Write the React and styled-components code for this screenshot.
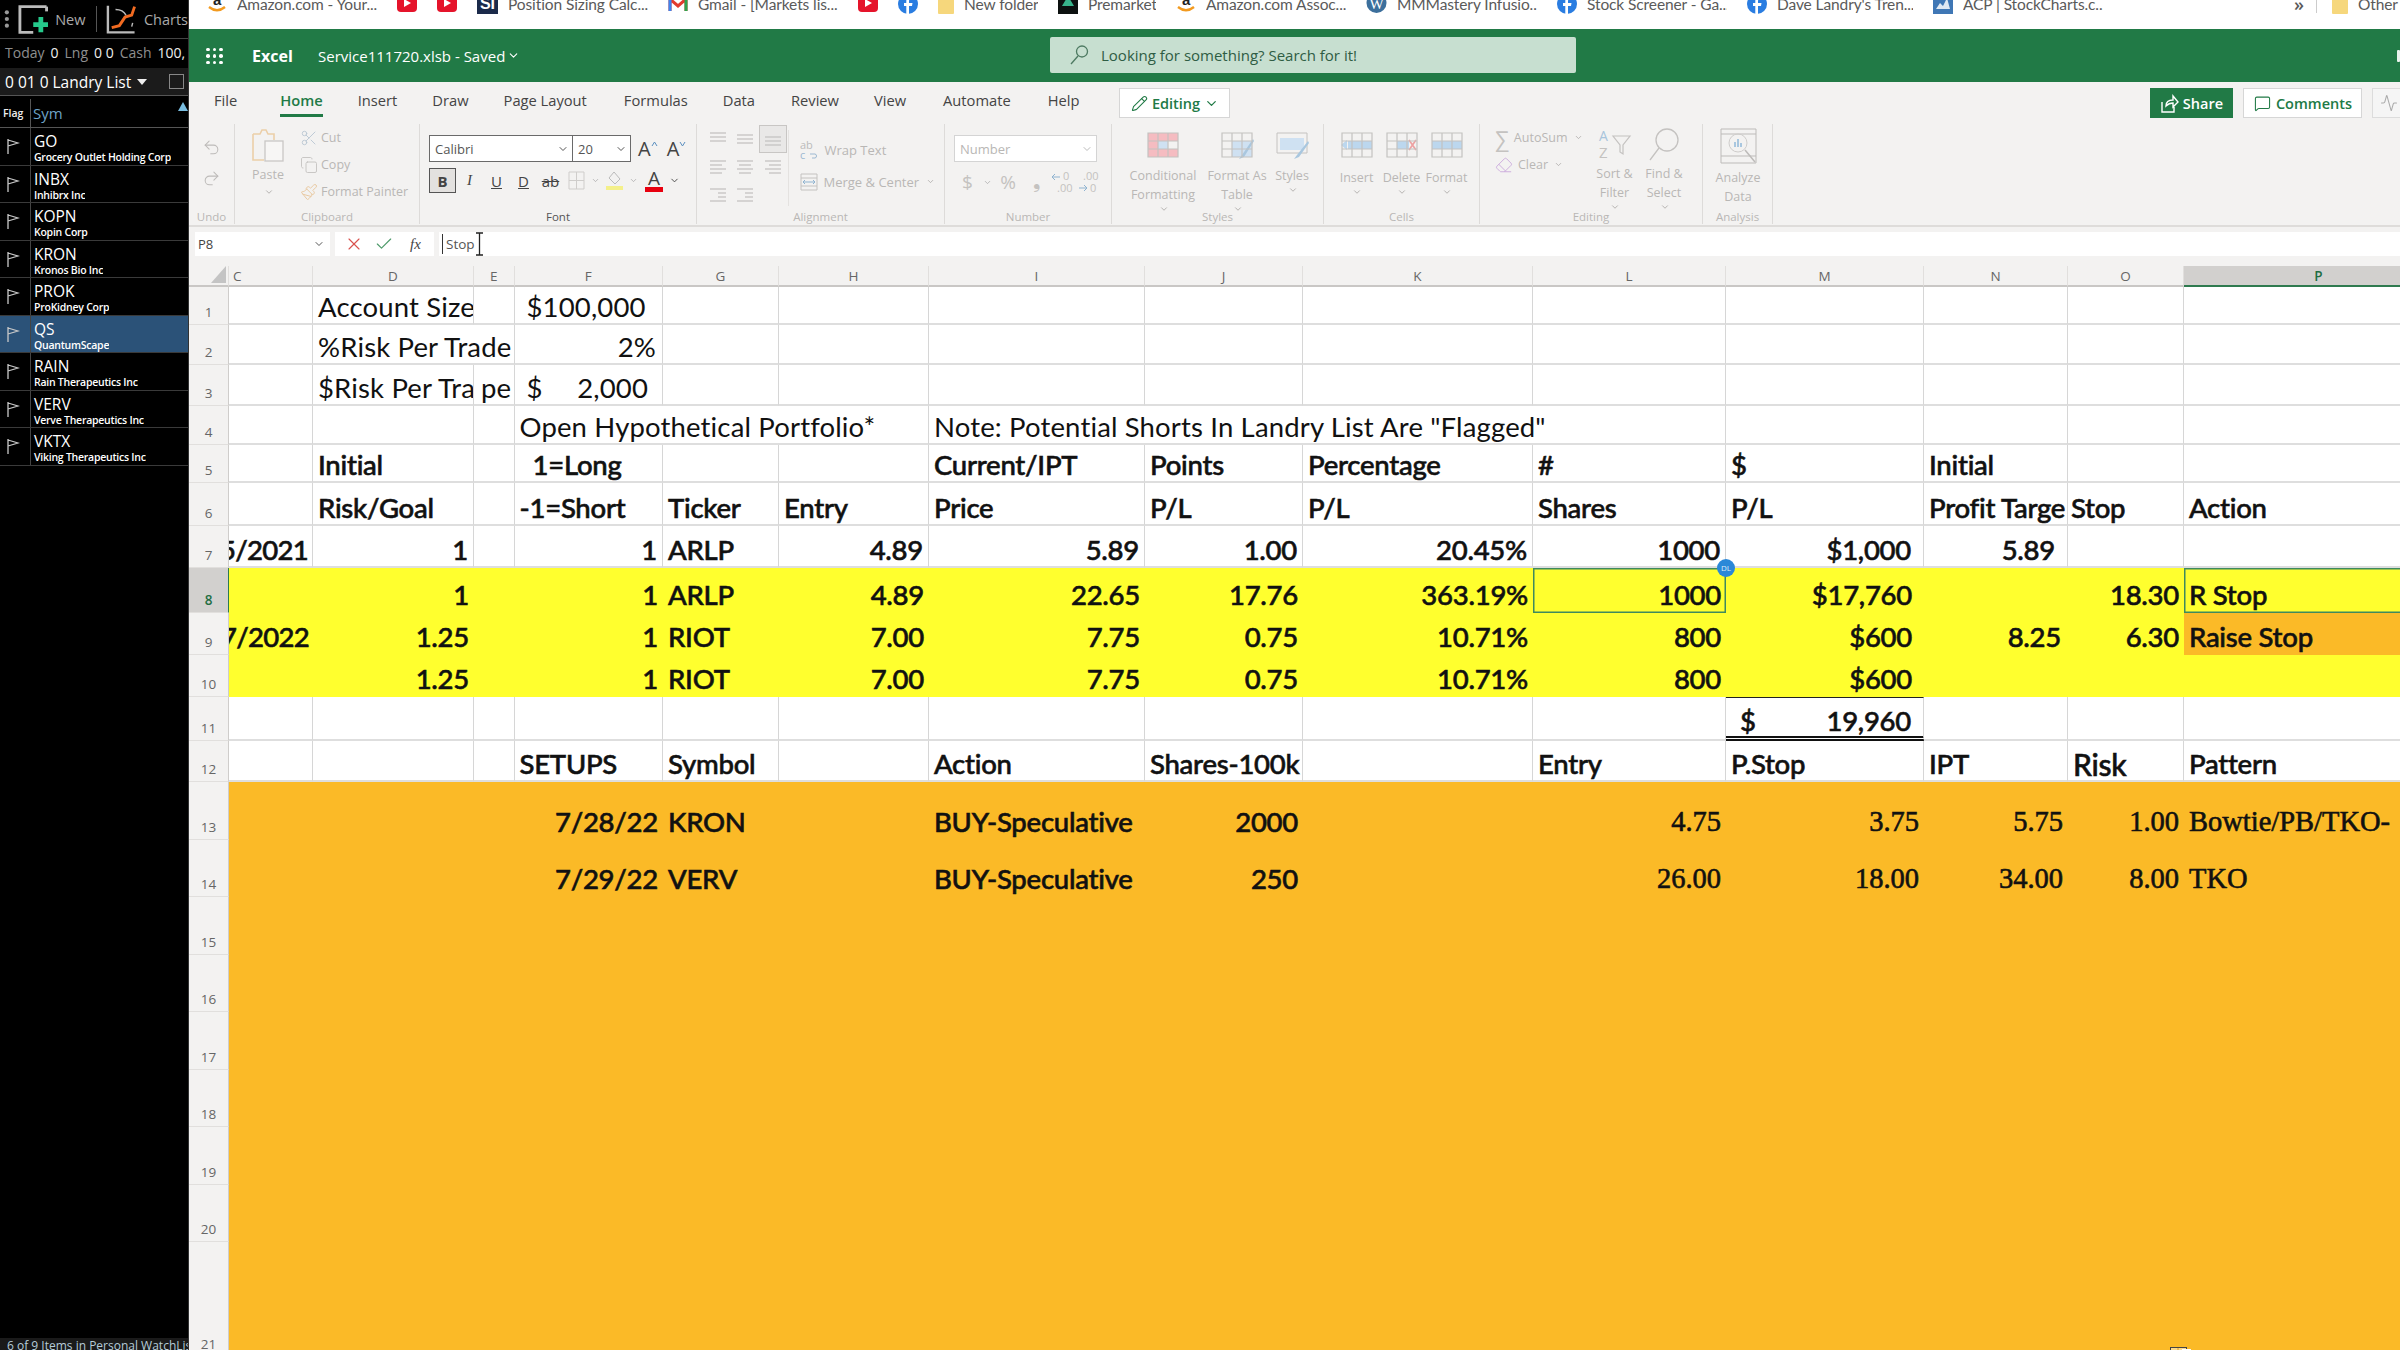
import React from 'react';
import styled, { createGlobalStyle } from 'styled-components';
import { Undo2, Redo2, Scissors, Copy, Paintbrush, ChevronDown, Pencil, MessageSquare, X, Check, Eraser, Activity } from 'lucide-react';

const Global = createGlobalStyle`
  html, body { margin: 0; padding: 0; width: 2400px; height: 1350px; overflow: hidden; background: #000; }
  * { box-sizing: border-box; }
`;

const UI = `"Open Sans", "Noto Sans", sans-serif`;
const CAL = `Lato, "Liberation Sans", sans-serif`;
const SER = `"Liberation Serif", serif`;
const GREEN = '#217a46';
const DIM = '#b9b7b5';

const Page = styled.div`display: flex; width: 2400px; height: 1350px; overflow: hidden; font-family: ${UI};`;

/* ---------- Sidebar ---------- */
const Sidebar = styled.aside`width: 189px; flex: none; background: #000; color: #fff; display: flex; flex-direction: column; height: 1350px; border-right: 1px solid #333;`;
const SideTools = styled.div`height: 39px; display: flex; align-items: center; padding-left: 4px; border-bottom: 1px solid #444; flex: none; color: #aaa; font-size: 14.5px;`;
const ToolLabel = styled.span`margin-left: ${p => p.$gap}px;`;
const ToolSep = styled.span`width: 1px; height: 26px; background: #555; margin: 0 9px 0 11px;`;
const Stats = styled.div`height: 27px; display: flex; align-items: center; gap: 6px; padding-left: 5px; font-size: 14px; color: #8f8f8f; flex: none; white-space: nowrap; overflow: hidden;`;
const StatVal = styled.span`color: #eee;`;
const ListBar = styled.div`height: 28px; margin: 2px 0 3px; display: flex; align-items: center; background: #1b1b1b; padding: 0 4px 0 5px; font-size: 15.5px; color: #fff; border-bottom: 1px solid #555; flex: none; white-space: nowrap;`;
const Caret = styled.span`width: 0; height: 0; border-left: 5px solid transparent; border-right: 5px solid transparent; border-top: 6px solid #eee; margin-left: 6px;`;
const CheckBox = styled.span`width: 15px; height: 15px; border: 1px solid #888; margin-left: auto;`;
const SideHead = styled.div`height: 29px; display: flex; align-items: stretch; border-bottom: 1px solid #555; position: relative; flex: none;`;
const FlagHead = styled.div`width: 31px; flex: none; border-right: 1px solid #555; font-size: 10.5px; font-weight: 600; display: flex; align-items: center; padding-left: 3px; color: #eee;`;
const SymHead = styled.div`padding-left: 2px; font-size: 15px; color: #6ea3c8; display: flex; align-items: center;`;
const SortUp = styled.span`position: absolute; right: 0; top: 3px; width: 0; height: 0; border-left: 5px solid transparent; border-right: 5px solid transparent; border-bottom: 9px solid #79bde0;`;
const StockRow = styled.div`height: 37.5px; display: flex; align-items: stretch; border-bottom: 1px solid #3a3a3a; background: ${p => p.$on ? '#2b5278' : 'transparent'}; flex: none;`;
const FlagCell = styled.div`width: 31px; flex: none; border-right: 1px solid #444; display: flex; align-items: center; justify-content: center; padding-right: 4px;`;
const StockText = styled.div`padding-left: 3px; display: flex; flex-direction: column; white-space: nowrap; overflow: hidden;`;
const Ticker = styled.div`font-size: 15.5px; line-height: 18px; margin-top: 4px;`;
const StockName = styled.div`font-size: 10.5px; letter-spacing: -0.25px; line-height: 14px; font-weight: 600;`;
const SideFoot = styled.div`margin-top: auto; height: 12px; background: #1a1a1a; color: #b5cbd8; font-size: 12px; line-height: 15px; padding-left: 7px; white-space: nowrap; overflow: hidden; flex: none;`;

const stocks = [
  ['GO', 'Grocery Outlet Holding Corp'], ['INBX', 'Inhibrx Inc'], ['KOPN', 'Kopin Corp'], ['KRON', 'Kronos Bio Inc'],
  ['PROK', 'ProKidney Corp'], ['QS', 'QuantumScape'], ['RAIN', 'Rain Therapeutics Inc'], ['VERV', 'Verve Therapeutics Inc'], ['VKTX', 'Viking Therapeutics Inc'],
];

const FlagIcon = () => (
  <svg width="14" height="16" viewBox="0 0 14 16" fill="none" stroke="#c9c9c9" strokeWidth="1.3"><path d="M2 1v15M2 2l10 3-10 3" /></svg>
);

const Side = () => (
  <Sidebar>
    <SideTools>
      <svg width="6" height="20" viewBox="0 0 6 20" fill="#999"><circle cx="3" cy="3" r="2.2" /><circle cx="3" cy="10" r="2.2" /><circle cx="3" cy="17" r="2.2" /></svg>
      <svg style={{ marginLeft: 8 }} width="32" height="32" viewBox="0 0 32 32" fill="none"><path d="M30 3H2v27h14" stroke="#bbb" strokeWidth="3" /><path d="M30 3v5" stroke="#bbb" strokeWidth="3" /><path d="M24 14v16M16 22h16" stroke="#25c98b" strokeWidth="5" /></svg>
      <ToolLabel $gap={7}>New</ToolLabel>
      <ToolSep />
      <svg width="32" height="32" viewBox="0 0 32 32" fill="none"><path d="M2 2v28h28" stroke="#bbb" strokeWidth="2.5" /><path d="M6 25l8-2 6-9 7-2 3-9" stroke="#f26b21" strokeWidth="3" /><path d="M10 6c6 0 9 2 11 6M28 20l-1 4" stroke="#bbb" strokeWidth="1.5" /></svg>
      <ToolLabel $gap={7}>Charts</ToolLabel>
    </SideTools>
    <Stats>Today <StatVal>0</StatVal> Lng<StatVal>0 0</StatVal> Cash <StatVal>100,</StatVal></Stats>
    <ListBar>0 01 0 Landry List<Caret /><CheckBox /></ListBar>
    <SideHead><FlagHead>Flag</FlagHead><SymHead>Sym</SymHead><SortUp /></SideHead>
    {stocks.map(([t, n]) => (
      <StockRow key={t} $on={t === 'QS'}>
        <FlagCell><FlagIcon /></FlagCell>
        <StockText><Ticker>{t}</Ticker><StockName>{n}</StockName></StockText>
      </StockRow>
    ))}
    <SideFoot>6 of 9 Items in Personal WatchList</SideFoot>
  </Sidebar>
);

/* ---------- Bookmarks ---------- */
const Excel = styled.main`flex: 1; min-width: 0; display: flex; flex-direction: column; background: #fff; overflow: hidden;`;
const BookBar = styled.div`height: 29px; flex: none; background: #fff; overflow: hidden;`;
const BookRow = styled.div`height: 20px; margin-top: -6px; display: flex; align-items: center; gap: 20px; padding-left: 18px; white-space: nowrap;`;
const Book = styled.div`display: flex; align-items: center; gap: 10px; flex: none; color: #5a5a5a; font-family: Lato, sans-serif; font-size: 15.5px; letter-spacing: -0.1px;`;
const BookText = styled.span`width: ${p => p.$w || 140}px; overflow: hidden; white-space: nowrap;`;
const More = styled.div`margin-left: auto; display: flex; align-items: center; color: #5a5a5a; font-size: 18px; font-weight: 600; flex: none;`;
const MoreSep = styled.span`width: 1px; height: 18px; background: #ccc; margin: 0 -5px 0 12px;`;

const Amz = () => <svg width="20" height="20" viewBox="0 0 20 20"><text x="10" y="11" textAnchor="middle" fontSize="15" fontWeight="700" fontFamily="Liberation Sans" fill="#222">a</text><path d="M2 13c5 4 11 4 16 0" stroke="#f29a1f" strokeWidth="2.4" fill="none" /></svg>;
const YT = () => <svg width="20" height="20" viewBox="0 0 20 20"><rect width="20" height="18" rx="4" fill="#e5142b" /><path d="M7 5l7 4-7 4z" fill="#fff" /></svg>;
const FB = () => <svg width="20" height="20" viewBox="0 0 20 20"><circle cx="10" cy="10" r="10" fill="#2a7de1" /><path d="M11 20v-8h3l.5-3H11V7c0-1 .5-1.6 1.7-1.6H14.500V3h-2.500C9.700 3 8.300 4.400 8.300 6.800V9H6v3h2.300v8z" fill="#fff" /></svg>;
const Folder = () => <svg width="16" height="20" viewBox="0 0 16 20"><rect width="16" height="20" rx="1" fill="#f6d77c" /></svg>;
const SI = () => <svg width="21" height="20" viewBox="0 0 21 20"><rect width="21" height="20" fill="#1b2a4a" /><text x="10.500" y="15" textAnchor="middle" fontSize="16" fontWeight="700" fontFamily="Liberation Sans" fill="#fff">SI</text></svg>;
const Gm = () => <svg width="20" height="16" viewBox="0 0 20 16" fill="none"><path d="M2 15V3l8 7 8-7v12" stroke="#e33b2e" strokeWidth="3" /><path d="M2 15V4" stroke="#3f84ee" strokeWidth="3" /><path d="M18 15V4" stroke="#2ea44f" strokeWidth="3" /></svg>;
const Pre = () => <svg width="20" height="20" viewBox="0 0 20 20"><rect width="20" height="20" fill="#0d1110" /><path d="M10 2l6 10H4z" fill="#38b48b" /></svg>;
const WP = () => <svg width="21" height="20" viewBox="0 0 21 20"><circle cx="10.500" cy="9" r="10" fill="#3c6f9c" /><text x="10.500" y="15" textAnchor="middle" fontSize="15" fontFamily="Liberation Serif" fill="#fff">W</text></svg>;
const ACP = () => <svg width="20" height="20" viewBox="0 0 20 20"><rect width="20" height="20" fill="#3f77b5" /><path d="M3 15l4-6 3 3 4-8 3 11z" fill="#dfe8f2" /></svg>;

const books = [
  [Amz, 'Amazon.com - Your...'], [YT], [YT], [SI, 'Position Sizing Calc...'], [Gm, 'Gmail - [Markets lis...'], [YT], [FB],
  [Folder, 'New folder', 74], [Pre, 'Premarket', 68], [Amz, 'Amazon.com Assoc...'], [WP, 'MMMastery Infusio...'], [FB, 'Stock Screener - Ga...'],
  [FB, "Dave Landry's Tren...", 136], [ACP, 'ACP | StockCharts.c...'],
];

const Bookmarks = () => (
  <BookBar>
    <BookRow>
      {books.map(([I, t, w], i) => (
        <Book key={i}><I />{t && <BookText $w={w}>{t}</BookText>}</Book>
      ))}
      <More>»<MoreSep /></More>
      <Book><Folder /><BookText $w={42}>Other bookmarks</BookText></Book>
    </BookRow>
  </BookBar>
);

/* ---------- Green title bar ---------- */
const TitleBar = styled.header`height: 53px; flex: none; background: ${GREEN}; color: #fff; display: flex; align-items: center; padding-left: 17px; position: relative;`;
const Waffle = styled.div`width: 18px; height: 16px; display: grid; grid-template-columns: repeat(3, 3.5px); grid-auto-rows: 3.5px; gap: 3px; margin-right: 28px;`;
const Dot = styled.i`background: #fff; border-radius: 50%;`;
const AppName = styled.div`font-size: 16px; font-weight: 700; width: 66px;`;
const FileName = styled.div`font-size: 15px; width: 208px; display: flex; align-items: center; gap: 2px; white-space: nowrap;`;
const SearchBox = styled.div`margin-left: 524px; width: 526px; height: 36px; margin-top: -2px; background: #c7dfd0; border-radius: 2px; color: #2f5d44; display: flex; align-items: center; padding-left: 20px; gap: 12px; font-size: 15px; white-space: nowrap; flex: none;`;
const EdgeMark = styled.span`margin-left: auto; width: 3px; height: 12px; background: #e8f2ec; border-radius: 1px;`;

const TitleRow = () => (
  <TitleBar>
    <Waffle>{Array.from({ length: 9 }, (_, i) => <Dot key={i} />)}</Waffle>
    <AppName>Excel</AppName>
    <FileName>Service111720.xlsb - Saved<ChevronDown size={13} /></FileName>
    <SearchBox>
      <svg width="19" height="20" viewBox="0 0 19 20" fill="none" stroke="#4e7a62" strokeWidth="1.3"><circle cx="12" cy="6.500" r="5.500" /><path d="M8 11l-7 8" /></svg>
      Looking for something? Search for it!
    </SearchBox>
    <EdgeMark />
  </TitleBar>
);

/* ---------- Tabs ---------- */
const TabBar = styled.nav`height: 40px; flex: none; background: #f3f2f1; display: flex; align-items: flex-start; padding-left: 25px; font-size: 14.7px; color: #444; white-space: nowrap;`;
const Tab = styled.div`height: 35px; line-height: 36px; margin-right: ${p => p.$gap}px; border-bottom: 3px solid ${p => p.$on ? GREEN : 'transparent'}; color: ${p => p.$on ? GREEN : '#444'}; font-weight: ${p => p.$on ? 600 : 400};`;
const Mode = styled.button`margin-top: 6px; width: 111px; height: 30px; margin-left: 5px; background: #fff; border: 1px solid #d6d6d6; color: ${GREEN}; font: 600 14.500px ${UI}; display: flex; align-items: center; justify-content: center; gap: 4px; padding: 0; flex: none;`;
const ShareBtn = styled.button`margin-top: 6px; margin-left: 920px; width: 83px; height: 30px; background: ${GREEN}; color: #fff; border: none; font: 600 14.500px ${UI}; display: flex; align-items: center; justify-content: center; gap: 4px; padding: 0; flex: none;`;
const CommentBtn = styled.button`margin-top: 6px; margin-left: 10px; width: 119px; height: 30px; background: #fff; color: ${GREEN}; border: 1px solid #d6d6d6; font: 600 14.500px ${UI}; display: flex; align-items: center; justify-content: center; gap: 5px; padding: 0; flex: none;`;
const ExtraBtn = styled.button`margin-top: 6px; margin-left: 10px; width: 40px; flex: none; height: 30px; background: #f5f5f5; border: 1px solid #dcdcdc; color: #aaa; display: flex; align-items: center; padding: 0 0 0 7px;`;

const tabs = [['File', 43], ['Home', 35], ['Insert', 35], ['Draw', 35], ['Page Layout', 37], ['Formulas', 35], ['Data', 36], ['Review', 35], ['View', 37], ['Automate', 37], ['Help', 35]];
const Tabs = () => (
  <TabBar>
    {tabs.map(([t, g]) => <Tab key={t} $gap={g} $on={t === 'Home'}>{t}</Tab>)}
    <Mode><Pencil size={17} strokeWidth={1.5} />Editing<ChevronDown size={15} /></Mode>
    <ShareBtn>
      <svg width="18" height="20" viewBox="0 0 18 20" fill="none" stroke="#fff" strokeWidth="1.4"><path d="M1 9v10h12v-5M5 13c0-4 3-6 7-6V3l5 6-5 5v-4c-3 0-5 1-7 3z" /></svg>
      Share
    </ShareBtn>
    <CommentBtn><MessageSquare size={17} strokeWidth={1.5} />Comments</CommentBtn>
    <ExtraBtn><Activity size={18} strokeWidth={1.4} /></ExtraBtn>
  </TabBar>
);

/* ---------- Ribbon ---------- */
const Ribbon = styled.section`height: 103px; flex: none; background: #f3f2f1; display: flex; align-items: stretch; padding: 2px 0 1px; font-size: 12.500px; color: ${DIM}; white-space: nowrap;`;
const Group = styled.div`width: ${p => p.$w}px; flex: none; border-right: 1px solid #dddbd9; display: flex; flex-direction: column;`;
const GroupBody = styled.div`height: 86px; display: flex; align-items: flex-start; padding-left: ${p => p.$pad || 0}px; position: relative;`;
const GroupLabel = styled.div`height: 14px; line-height: 14px; text-align: center; font-size: 11.500px; color: ${p => p.$on ? '#555' : DIM};`;
const UndoCol = styled.div`width: 100%; display: flex; flex-direction: column; align-items: center; gap: 12px; padding-top: 14px; color: #bdbbb9;`;
const PasteCol = styled.div`width: 34px; display: flex; flex-direction: column; align-items: center; padding-top: 4px; flex: none; margin-right: 15px;`;
const PasteText = styled.div`line-height: 16px; margin-top: 5px; margin-bottom: 4px;`;
const SmallCol = styled.div`display: flex; flex-direction: column; width: ${p => p.$w ? p.$w + 'px' : 'auto'}; flex: none;`;
const SmallTool = styled.div`height: 27px; display: flex; align-items: center; gap: ${p => p.$gap || 3}px; font-size: ${p => p.$fs || 12.5}px;`;
const FontStack = styled.div`display: flex; flex-direction: column; gap: 6px; padding-top: 11px;`;
const FontRow = styled.div`display: flex; align-items: center;`;
const Select = styled.div`width: ${p => p.$w}px; height: 27px; background: #fff; border: 1px solid ${p => p.$on ? '#6a6a6a' : '#d4d4d4'}; margin-left: -1px; display: flex; align-items: center; justify-content: space-between; padding: 0 3px 0 5px; color: ${p => p.$on ? '#555' : DIM}; font-size: 13px; flex: none;`;
const FontBtn = styled.div`width: ${p => p.$w}px; height: 25px; flex: none; display: flex; align-items: center; justify-content: center; color: #444; position: relative; font-family: ${p => p.$serif ? SER : UI}; font-size: 15px; font-weight: ${p => p.$b ? 700 : 400}; font-style: ${p => p.$i ? 'italic' : 'normal'}; text-decoration: ${p => p.$u ? 'underline' : 'none'}; background: ${p => p.$on ? '#e3e1df' : 'transparent'}; border: ${p => p.$on ? '1px solid #555' : 'none'}; margin-left: ${p => p.$on ? -1 : 0}px;`;
const Grow = styled.div`margin-left: ${p => p.$ml}px; font-size: 20px; line-height: 27px; color: #444; display: flex; align-items: flex-start;`;
const GrowMark = styled.svg`margin-top: 6px;`;
const AlignGrid = styled.div`display: grid; grid-template-columns: repeat(3, 27.5px); grid-auto-rows: 28px; padding-top: 1px; margin-left: 7px; flex: none;`;
const AlignCell = styled.div`display: flex; align-items: center; justify-content: center; border: ${p => p.$on ? '1px solid #c8c6c4' : 'none'}; background: ${p => p.$on ? '#e9e8e7' : 'transparent'};`;
const WrapCol = styled.div`margin: 6px 0 0 1px; padding: 6px 0 0 11px; height: 76px; border-left: 1px solid #e4e2e0; display: flex; flex-direction: column; gap: 5px;`;
const NumRow = styled.div`display: flex; align-items: center; margin-top: 5px; height: 30px; font-size: 19px; color: #c4c2c0;`;
const NumSlot = styled.div`width: ${p => p.$w}px; text-align: center; flex: none; display: flex; justify-content: center;`;
const NumStack = styled.div`padding-top: 11px;`;
const BigTool = styled.div`width: ${p => p.$w}px; flex: none; display: flex; flex-direction: column; align-items: center; line-height: 19px; text-align: center;`;
const BigIcon = styled.div`height: ${p => p.$h || 42}px; display: flex; align-items: center; justify-content: center; flex: none;`;
const TinyChev = styled.span`display: inline-flex; vertical-align: middle; margin-left: 1px;`;
const BigLabel = styled.span`margin-top: ${p => p.$mt || 0}px; display: block;`;
const SumMark = styled.span`font-size: 22px; line-height: 22px; color: #c4c2c0;`;

const Chev = ({ s = 10, c = '#a9a7a5' }) => <TinyChev><ChevronDown size={s} color={c} /></TinyChev>;

const Lines = ({ rows, c = '#c8c6c4' }) => (
  <svg width="18" height="18" viewBox="0 0 18 18" stroke={c} strokeWidth="1.4">
    {rows.map(([y, a, b], i) => <path key={i} d={`M${a} ${y}H${b}`} />)}
  </svg>
);

const TableIcon = ({ children, w = 34, h = 28 }) => (
  <svg width={w} height={h} viewBox="0 0 34 28" fill="none">
    {children}
    <path d="M2 2h30v24H2zM12 2v24M22 2v24M2 10h30M2 18h30" stroke="#c4c2c0" strokeWidth="1.2" />
  </svg>
);

const DecimalMore = () => (
  <svg width="22" height="24" viewBox="0 0 22 24" fill="#c4c2c0" fontSize="11" fontFamily="Open Sans"><path d="M1 7h8M4 4L1 7l3 3" stroke="#8fb3d0" fill="none" /><text x="12" y="10">0</text><text x="6" y="22">.00</text></svg>
);
const DecimalLess = () => (
  <svg width="22" height="24" viewBox="0 0 22 24" fill="#c4c2c0" fontSize="11" fontFamily="Open Sans"><text x="6" y="10">.00</text><path d="M2 18h8M7 15l3 3-3 3" stroke="#8fb3d0" fill="none" /><text x="13" y="22">0</text></svg>
);

const RibbonPart = () => (
  <Ribbon>
    <Group $w={46}>
      <GroupBody><UndoCol><Undo2 size={19} strokeWidth={1.3} /><Redo2 size={19} strokeWidth={1.3} /></UndoCol></GroupBody>
      <GroupLabel>Undo</GroupLabel>
    </Group>
    <Group $w={185}>
      <GroupBody $pad={16}>
        <PasteCol>
          <svg width="34" height="34" viewBox="0 0 34 34" fill="none"><path d="M2 6h7l2-4h4l2 4h6v6M2 6v26h11" stroke="#eccfa8" strokeWidth="1.6" /><rect x="14" y="13" width="18" height="20" fill="#f7f6f5" stroke="#c9c7c5" strokeWidth="1.3" /></svg>
          <PasteText>Paste</PasteText>
          <Chev />
        </PasteCol>
        <SmallCol>
          <SmallTool><Scissors size={18} strokeWidth={1.2} color="#b9c6d2" />Cut</SmallTool>
          <SmallTool><Copy size={18} strokeWidth={1.2} color="#c4c2c0" />Copy</SmallTool>
          <SmallTool><Paintbrush size={18} strokeWidth={1.3} color="#e8c8a0" />Format Painter</SmallTool>
        </SmallCol>
      </GroupBody>
      <GroupLabel>Clipboard</GroupLabel>
    </Group>
    <Group $w={277}>
      <GroupBody $pad={10}>
        <FontStack>
          <FontRow>
            <Select $w={144} $on>Calibri<ChevronDown size={12} color="#555" /></Select>
            <Select $w={59} $on>20<ChevronDown size={12} color="#555" /></Select>
            <Grow $ml={7}>A<GrowMark width="7" height="6" viewBox="0 0 7 6" fill="none" stroke="#5a8fc0"><path d="M1 5l2.500-4L6 5" /></GrowMark></Grow>
            <Grow $ml={9}>A<GrowMark width="7" height="6" viewBox="0 0 7 6" fill="none" stroke="#5a8fc0"><path d="M1 1l2.500 4L6 1" /></GrowMark></Grow>
          </FontRow>
          <FontRow>
            <FontBtn $w={27} $on $b>B</FontBtn>
            <FontBtn $w={27} $i $serif>I</FontBtn>
            <FontBtn $w={27} $u>U</FontBtn>
            <FontBtn $w={27} $u>D</FontBtn>
            <FontBtn $w={27}><s>ab</s></FontBtn>
            <FontBtn $w={25}><svg width="17" height="19" viewBox="0 0 17 19" fill="none" stroke="#cfcdcb"><path d="M1 1h15v17H1zM8.500 1v17M1 9.500h15" /></svg></FontBtn>
            <FontBtn $w={12}><ChevronDown size={9} color="#aaa" /></FontBtn>
            <FontBtn $w={26}><svg width="17" height="21" viewBox="0 0 17 21" fill="none"><path d="M8 2l6 7-5 5-6-6z" stroke="#bbb" /><rect x="0" y="16" width="17" height="4" fill="#f4f08a" /></svg></FontBtn>
            <FontBtn $w={13}><ChevronDown size={9} color="#aaa" /></FontBtn>
            <FontBtn $w={28}><svg width="20" height="23" viewBox="0 0 20 23"><text x="10" y="16" textAnchor="middle" fontSize="19" fontFamily="Open Sans" fill="#444">A</text><rect x="1" y="18" width="18" height="5" fill="#e8000f" /></svg></FontBtn>
            <FontBtn $w={12}><ChevronDown size={11} color="#444" /></FontBtn>
          </FontRow>
        </FontStack>
      </GroupBody>
      <GroupLabel $on>Font</GroupLabel>
    </Group>
    <Group $w={248}>
      <GroupBody>
        <AlignGrid>
          <AlignCell><Lines rows={[[3, 1, 17], [7, 1, 17], [11, 1, 17]]} /></AlignCell>
          <AlignCell><Lines rows={[[5, 1, 17], [9, 1, 17], [13, 1, 17]]} /></AlignCell>
          <AlignCell $on><Lines rows={[[7, 1, 17], [11, 1, 17], [15, 1, 17]]} /></AlignCell>
          <AlignCell><Lines rows={[[3, 1, 17], [7, 1, 13], [11, 1, 17], [15, 1, 13]]} /></AlignCell>
          <AlignCell><Lines rows={[[3, 1, 17], [7, 3, 15], [11, 1, 17], [15, 3, 15]]} /></AlignCell>
          <AlignCell><Lines rows={[[3, 1, 17], [7, 5, 17], [11, 1, 17], [15, 5, 17]]} /></AlignCell>
          <AlignCell><Lines rows={[[3, 1, 17], [7, 9, 17], [11, 9, 17], [15, 1, 17]]} /></AlignCell>
          <AlignCell><Lines rows={[[3, 1, 17], [7, 9, 17], [11, 9, 17], [15, 1, 17]]} /></AlignCell>
        </AlignGrid>
        <WrapCol>
          <SmallTool $gap={7} $fs={13}>
            <svg width="18" height="22" viewBox="0 0 18 22" fill="none"><text x="0" y="10" fontSize="11" fill="#bbb" fontFamily="Open Sans">ab</text><text x="0" y="20" fontSize="11" fill="#9db9d2" fontFamily="Open Sans">c</text><path d="M10 15h5c2 0 2 4 0 4h-3" stroke="#9db9d2" /></svg>
            Wrap Text
          </SmallTool>
          <SmallTool $gap={6} $fs={13}>
            <svg width="18" height="18" viewBox="0 0 18 18" fill="none"><path d="M1 1h16v16H1zM1 5h16M1 13h16" stroke="#c4c2c0" /><path d="M3 9h12M5 7L3 9l2 2M13 7l2 2-2 2" stroke="#8fb3d0" /></svg>
            Merge &amp; Center<Chev s={9} />
          </SmallTool>
        </WrapCol>
      </GroupBody>
      <GroupLabel>Alignment</GroupLabel>
    </Group>
    <Group $w={167}>
      <GroupBody $pad={10}>
        <NumStack>
          <Select $w={143}>Number<ChevronDown size={12} color="#bbb" /></Select>
          <NumRow>
            <NumSlot $w={25}>$</NumSlot>
            <NumSlot $w={14}><ChevronDown size={9} color="#aaa" /></NumSlot>
            <NumSlot $w={28}>%</NumSlot>
            <NumSlot $w={28}>❟</NumSlot>
            <NumSlot $w={24}><DecimalMore /></NumSlot>
            <NumSlot $w={28}><DecimalLess /></NumSlot>
          </NumRow>
        </NumStack>
      </GroupBody>
      <GroupLabel>Number</GroupLabel>
    </Group>
    <Group $w={212}>
      <GroupBody $pad={2}>
        <BigTool $w={98}>
          <BigIcon><TableIcon><path d="M2 2h30v8H2zM2 18h30v8H2zM2 10h10v8H2z" fill="#f5bcc1" /><path d="M12 10h10v8H12z" fill="#cfe1f2" /></TableIcon></BigIcon>
          Conditional<br />Formatting<Chev s={10} />
        </BigTool>
        <BigTool $w={50}>
          <BigIcon><TableIcon><path d="M12 10h20v16H12z" fill="#cfe1f2" /><path d="M33 8L22 24l-3 4 5-2L34 10z" fill="#a9c7df" /></TableIcon></BigIcon>
          Format As<br />Table<Chev s={10} />
        </BigTool>
        <BigTool $w={60}>
          <BigIcon><svg width="34" height="28" viewBox="0 0 34 28" fill="none"><path d="M5 7h24v12H5z" fill="#cfe1f2" /><path d="M2 2h30v20H2z" stroke="#c4c2c0" /><path d="M33 10L22 24l-3 4 5-2L34 12z" fill="#a9c7df" /></svg></BigIcon>
          Styles<br /><Chev s={10} />
        </BigTool>
      </GroupBody>
      <GroupLabel>Styles</GroupLabel>
    </Group>
    <Group $w={156}>
      <GroupBody $pad={10}>
        <BigTool $w={45}>
          <BigIcon><TableIcon><path d="M8 10h24v8H8z" fill="#bcd7ee" /><path d="M1 14l6-5v10z" fill="#bcd7ee" /></TableIcon></BigIcon>
          <BigLabel $mt={2}>Insert</BigLabel><Chev s={10} />
        </BigTool>
        <BigTool $w={45}>
          <BigIcon><TableIcon><path d="M12 10h12v8H12z" fill="#bcd7ee" /><path d="M24 9l7 10M31 9l-7 10" stroke="#eda0a0" strokeWidth="1.6" /></TableIcon></BigIcon>
          <BigLabel $mt={2}>Delete</BigLabel><Chev s={10} />
        </BigTool>
        <BigTool $w={45}>
          <BigIcon><TableIcon><path d="M2 10h30v8H2z" fill="#bcd7ee" /></TableIcon></BigIcon>
          <BigLabel $mt={2}>Format</BigLabel><Chev s={10} />
        </BigTool>
      </GroupBody>
      <GroupLabel>Cells</GroupLabel>
    </Group>
    <Group $w={223}>
      <GroupBody $pad={15}>
        <SmallCol $w={95}>
          <SmallTool $gap={5}><SumMark>∑</SumMark>AutoSum<Chev s={9} /></SmallTool>
          <SmallTool $gap={5}><Eraser size={18} strokeWidth={1.3} color="#cdaedd" />Clear<Chev s={9} /></SmallTool>
        </SmallCol>
        <BigTool $w={49}>
          <BigIcon $h={40}><svg width="34" height="32" viewBox="0 0 34 32" fill="none"><text x="1" y="13" fontSize="14" fill="#a8c4dc" fontFamily="Open Sans">A</text><text x="1" y="30" fontSize="15" fill="#c4c2c0" fontFamily="Open Sans">Z</text><path d="M15 8h17l-7 9v9l-3-2v-7z" stroke="#c4c2c0" strokeWidth="1.2" /></svg></BigIcon>
          Sort &amp;<br />Filter<Chev s={10} />
        </BigTool>
        <BigTool $w={50}>
          <BigIcon $h={40}><svg width="32" height="34" viewBox="0 0 32 34" fill="none" stroke="#c4c2c0" strokeWidth="1.3"><circle cx="19" cy="13" r="11" /><path d="M11 21L2 33" /></svg></BigIcon>
          Find &amp;<br />Select<Chev s={10} />
        </BigTool>
      </GroupBody>
      <GroupLabel>Editing</GroupLabel>
    </Group>
    <Group $w={70}>
      <GroupBody>
        <BigTool $w={70}>
          <BigIcon $h={44}><svg width="37" height="36" viewBox="0 0 37 36" fill="none" stroke="#bdbbb9"><path d="M1 1h35v34H1zM1 6h35M1 28h35" /><circle cx="18" cy="15" r="9" stroke="#cfcdcb" /><path d="M15 19v-5M18 19v-8M21 19v-4" stroke="#a9c7df" strokeWidth="2" /><path d="M25 22l10 12" strokeWidth="1.5" /></svg></BigIcon>
          Analyze<br />Data
        </BigTool>
      </GroupBody>
      <GroupLabel>Analysis</GroupLabel>
    </Group>
  </Ribbon>
);

/* ---------- Formula bar ---------- */
const FormulaBar = styled.div`height: 41px; flex: none; background: #f3f2f1; border-top: 2px solid #dedcda; padding: 5px 0 10px 6px; display: flex; gap: 5px;`;
const NameBox = styled.div`width: 135px; background: #fff; display: flex; align-items: center; justify-content: space-between; padding: 0 5px 0 3px; font-size: 13px; color: #444; flex: none;`;
const FxBox = styled.div`width: 99px; background: #fff; display: flex; align-items: center; gap: 10px; padding-left: 9px; flex: none;`;
const FxMark = styled.span`font: italic 15px ${SER}; color: #444; margin-left: 6px;`;
const FormulaInput = styled.div`flex: 1; background: #fff; display: flex; align-items: center; padding-left: 3px; font-size: 13.500px; color: #555;`;
const TextCaret = styled.span`width: 1px; height: 20px; background: #333; margin-right: 3px;`;

const Formula = () => (
  <FormulaBar>
    <NameBox>P8<ChevronDown size={12} color="#555" /></NameBox>
    <FxBox><X size={20} strokeWidth={1.4} color="#d9534f" /><Check size={20} strokeWidth={1.4} color="#4e9a6a" /><FxMark>fx</FxMark></FxBox>
    <FormulaInput>
      <TextCaret />Stop
      <svg width="9" height="24" viewBox="0 0 9 24" fill="none" stroke="#222" strokeWidth="1.3"><path d="M1 1h7M4.500 1v22M1 23h7" /></svg>
    </FormulaInput>
  </FormulaBar>
);

/* ---------- Sheet ---------- */
const columns = [['C', 84], ['D', 161], ['E', 40.5], ['F', 148.5], ['G', 116], ['H', 150], ['I', 216], ['J', 158], ['K', 230], ['L', 193], ['M', 198], ['N', 144], ['O', 116], ['P', 270]];
const letters = columns.map(c => c[0]);

const Sheet = styled.div`
  flex: 1; min-height: 0; overflow: hidden; position: relative; display: grid; align-content: start;
  grid-template-columns: 40px ${columns.map(c => c[1] + 'px').join(' ')};
  grid-template-rows: 21px 38px 40px 41px 39px 38px 43px 42px 45px 42px 42px 44px 41px repeat(8, 57.500px) 115px;
  font-family: ${CAL}; font-size: 27.5px; color: #111;
`;
const Corner = styled.div`background: #f3f2f1; border-bottom: 2px solid #c9c7c5; border-right: 1px solid #e1dfdd; position: relative;`;
const CornerMark = styled.span`position: absolute; right: 2px; bottom: 2px; width: 0; height: 0; border-left: 15px solid transparent; border-bottom: 17px solid #c4c4c4;`;
const ColHead = styled.div`background: ${p => p.$on ? '#d2d0ce' : '#f3f2f1'}; border-bottom: 2px solid ${p => p.$on ? '#2f7a4f' : '#c9c7c5'}; border-right: 1px solid #e1dfdd; color: ${p => p.$on ? '#1f6e43' : '#666'}; font: ${p => p.$on ? 600 : 400} 13.500px ${UI}; display: flex; align-items: center; justify-content: ${p => p.$left ? 'flex-start' : 'center'}; padding-left: ${p => p.$left ? 4 : 0}px;`;
const RowHead = styled.div`background: ${p => p.$on ? '#d2d0ce' : '#f3f2f1'}; border-bottom: 1px solid #e1dfdd; border-right: 1px solid ${p => p.$on ? '#2f7a4f' : '#cfcdcb'}; color: ${p => p.$on ? '#1f6e43' : '#666'}; font: ${p => p.$on ? 600 : 400} 13.500px ${UI}; display: flex; align-items: flex-end; justify-content: center; padding-bottom: 3px;`;
const Cell = styled.div`
  grid-column: span ${p => p.$span || 1}; position: relative; display: flex; align-items: flex-end; line-height: 30px; white-space: nowrap; min-width: 0;
  overflow: ${p => p.$open ? 'visible' : 'hidden'};
  justify-content: ${p => p.$acct ? 'space-between' : p.$right ? 'flex-end' : 'flex-start'};
  padding: 0 ${p => p.$pr ?? 5}px ${p => p.$flat ? 3 : 1}px ${p => p.$pl ?? 5}px;
  background: ${p => p.$fill || '#fff'};
  border-right: ${p => p.$flat ? 'none' : '1px solid #d6d6d6'};
  border-bottom: ${p => p.$flat ? 'none' : '2px solid #dedede'};
  font-family: ${p => p.$serif ? SER : 'inherit'};
  font-size: ${p => p.$serif ? '28.5px' : p.$fs ? p.$fs + 'px' : 'inherit'};
  font-weight: ${p => p.$b ? 500 : 400};
  -webkit-text-stroke: ${p => p.$b ? '0.6px' : '0'};
  letter-spacing: ${p => p.$ls !== undefined ? p.$ls : p.$serif ? 0 : p.$b ? -0.25 : 0.15}px;
  ${p => p.$total ? 'border-top: 1.500px solid #222; border-bottom: 5px double #111; padding-bottom: 0;' : ''}
  ${p => p.$select ? 'box-shadow: inset 0 0 0 1.500px #3f8a5e; z-index: 2;' : ''}
`;
const Presence = styled.span`position: absolute; right: -9px; top: -9px; width: 18px; height: 18px; border-radius: 50%; background: #2b88d8; color: #dcecf9; font: 8px/18px ${UI}; letter-spacing: 0; text-align: center; -webkit-text-stroke: 0;`;
const SheetView = styled.span`position: absolute; left: 1981px; top: 1067px; width: 21px; height: 13px; z-index: 3;`;

const Y = '#ffff2e', O = '#fbba27';
const R = (t, o) => ({ t, right: true, b: true, ...o });
const L = (t, o) => ({ t, b: true, ...o });
const N = (t, o) => ({ t, ...o });
const Rn = (t, o) => ({ t, right: true, ...o });

const serifR = t => R(t, { serif: true });
const serifL = t => L(t, { serif: true });

const rows = [
  { n: 1, c: { D: N('Account Size'), F: N('$100,000', { pl: 12 }) } },
  { n: 2, c: { D: N('%Risk Per Trade', { span: 2 }), F: Rn('2%', { pr: 6 }) } },
  { n: 3, c: { D: N('$Risk Per Tra', { pr: 0 }), E: N('pe', { pl: 7, pr: 0 }), F: { t: '$', a: '2,000', pl: 12, pr: 14 } } },
  { n: 4, c: { F: N('Open Hypothetical Portfolio*', { span: 3 }), I: N('Note: Potential Shorts In Landry List Are "Flagged"', { span: 4 }) } },
  { n: 5, c: { D: L('Initial'), F: L('1=Long', { pl: 18 }), I: L('Current/IPT'), J: L('Points'), K: L('Percentage'), L: L('#'), M: L('$'), N: L('Initial') } },
  { n: 6, c: { D: L('Risk/Goal'), F: L('-1=Short'), G: L('Ticker'), H: L('Entry'), I: L('Price'), J: L('P/L'), K: L('P/L'), L: L('Shares'), M: L('P/L'), N: L('Profit Targe', { pr: 0 }), O: L('Stop', { pl: 3 }), P: L('Action') } },
  { n: 7, c: { C: R('5/2021', { pr: 4, ls: -0.7 }), D: R('1'), F: R('1'), G: L('ARLP'), H: R('4.89'), I: R('5.89'), J: R('1.00'), K: R('20.45%'), L: R('1000'), M: R('$1,000', { pr: 12 }), N: R('5.89', { pr: 12 }) } },
  { n: 8, fill: Y, on: true, c: { D: R('1'), F: R('1'), G: L('ARLP'), H: R('4.89'), I: R('22.65'), J: R('17.76'), K: R('363.19%'), L: R('1000', { select: true, open: true, badge: true }), M: R('$17,760', { pr: 12 }), O: R('18.30'), P: L('R Stop', { select: true }) } },
  { n: 9, fill: Y, c: { C: R('7/2022', { pr: 4, ls: -0.7 }), D: R('1.25'), F: R('1'), G: L('RIOT'), H: R('7.00'), I: R('7.75'), J: R('0.75'), K: R('10.71%'), L: R('800'), M: R('$600', { pr: 12 }), N: R('8.25', { pr: 7 }), O: R('6.30'), P: L('Raise Stop', { fill: O }) } },
  { n: 10, fill: Y, c: { D: R('1.25'), F: R('1'), G: L('RIOT'), H: R('7.00'), I: R('7.75'), J: R('0.75'), K: R('10.71%'), L: R('800'), M: R('$600', { pr: 12 }) } },
  { n: 11, c: { M: { t: '$', a: '19,960', b: true, total: true, pl: 14, pr: 12 } } },
  { n: 12, c: { F: L('SETUPS'), G: L('Symbol'), I: L('Action'), J: L('Shares-100k', { pr: 0 }), L: L('Entry'), M: L('P.Stop'), N: L('IPT'), O: L('Risk', { fs: 30 }), P: L('Pattern') } },
  { n: 13, fill: O, c: { F: R('7/28/22'), G: L('KRON'), I: L('BUY-Speculative'), J: R('2000'), L: serifR('4.75'), M: serifR('3.75'), N: serifR('5.75'), O: serifR('1.00'), P: serifL('Bowtie/PB/TKO-') } },
  { n: 14, fill: O, c: { F: R('7/29/22'), G: L('VERV'), I: L('BUY-Speculative'), J: R('250'), L: serifR('26.00'), M: serifR('18.00'), N: serifR('34.00'), O: serifR('8.00'), P: serifL('TKO') } },
  ...[15, 16, 17, 18, 19, 20, 21].map(n => ({ n, fill: O, c: {} })),
];

const renderRow = r => {
  const out = [<RowHead key={`h${r.n}`} $on={r.on}>{r.n}</RowHead>];
  let skip = 0;
  letters.forEach(col => {
    if (skip > 0) { skip -= 1; return; }
    const d = r.c[col] || {};
    if (d.span) skip = d.span - 1;
    const fill = d.fill || r.fill;
    out.push(
      <Cell key={`${r.n}${col}`} $span={d.span} $right={d.right} $b={d.b} $serif={d.serif} $pl={d.pl} $pr={d.pr} $fill={fill} $fs={d.fs} $ls={d.ls}
        $flat={!!r.fill} $select={d.select} $open={d.open} $total={d.total} $acct={!!d.a}>
        {d.t && <span>{d.t}</span>}
        {d.a && <span>{d.a}</span>}
        {d.badge && <Presence>DL</Presence>}
      </Cell>
    );
  });
  return out;
};

const SheetPart = () => (
  <Sheet>
    <Corner><CornerMark /></Corner>
    {letters.map(l => <ColHead key={l} $on={l === 'P'} $left={l === 'C'}>{l}</ColHead>)}
    {rows.map(renderRow)}
    <SheetView>
      <svg width="21" height="13" viewBox="0 0 21 13"><rect x="0.500" y="0.500" width="16" height="12" fill="#fbd98a" stroke="#444" /><path d="M8 1v11" stroke="#e0a020" /><rect x="12" y="2" width="9" height="9" fill="#fff" /><rect x="14" y="5" width="5" height="3" fill="#334" /></svg>
    </SheetView>
  </Sheet>
);

export default function App() {
  return (
    <Page>
      <Global />
      <Side />
      <Excel>
        <Bookmarks />
        <TitleRow />
        <Tabs />
        <RibbonPart />
        <Formula />
        <SheetPart />
      </Excel>
    </Page>
  );
}
